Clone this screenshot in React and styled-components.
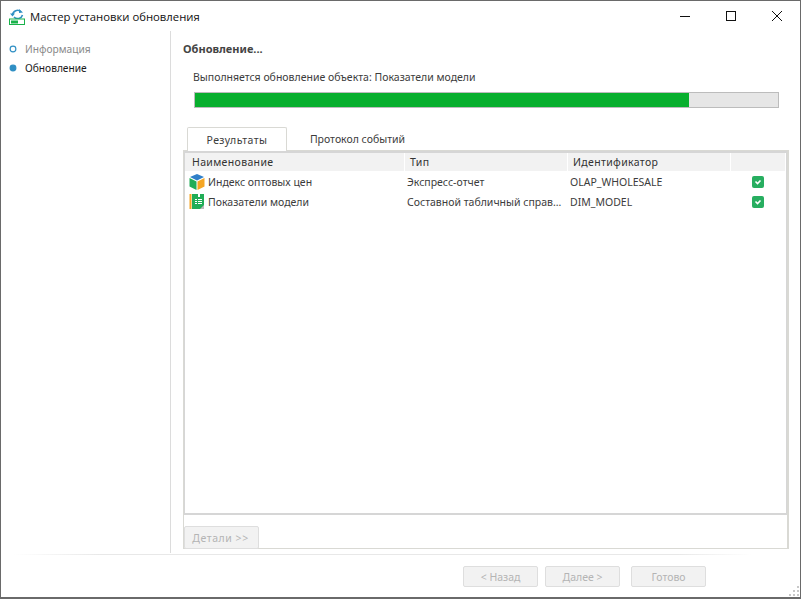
import React from "react";
import styled, { createGlobalStyle } from "styled-components";

const Global = createGlobalStyle`
  html, body { margin: 0; padding: 0; background: #fff; }
  body { font-family: "Noto Sans", "Open Sans", sans-serif; font-size: 10.5px; color: #3c3c3c; }
`;

const Win = styled.div`
  box-sizing: border-box; width: 801px; height: 599px; border: 1px solid #6a6a6a; border-bottom-width: 2px;
  display: flex; flex-direction: column; background: #fff; position: relative; overflow: hidden;
`;
const TitleBar = styled.div`height: 30px; flex: none; display: flex; align-items: center; padding-left: 8px;`;
const TitleText = styled.div`margin-left: 4px; font-family: "Open Sans", sans-serif; font-size: 11.3px; color: #111; white-space: nowrap; flex: 1;`;
const WinBtns = styled.div`display: flex; align-items: center;`;
const WinBtn = styled.div`width: 46px; height: 30px; display: flex; align-items: center; justify-content: center;`;
const Body = styled.div`display: flex; height: 522px; flex: none;`;
const Sidebar = styled.div`
  box-sizing: border-box; width: 170px; flex: none; border-right: 1px solid #dcdcdc; padding-top: 8px;
`;
const Step = styled.div`
  height: 19px; display: flex; align-items: center; padding-left: 9px; gap: 9px; font-size: 10.2px;
  color: ${p => (p.$active ? "#1a1a1a" : "#8a8a8a")};
`;
const Dot = styled.span`
  box-sizing: border-box; width: 6px; height: 6px; border-radius: 50%; flex: none;
  border: 1px solid #2f8fc4; background: ${p => (p.$active ? "#2f8fc4" : "#fff")};
  transform: scale(1.15);
`;
const Main = styled.div`flex: 1; min-width: 0; padding: 10px 12px 4px 12px; display: flex; flex-direction: column;`;
const Heading = styled.div`font-weight: 700; font-size: 11px; color: #444; height: 16px; line-height: 16px;`;
const ProgressLabel = styled.div`margin: 12px 0 0 10px; height: 16px; line-height: 16px;`;
const Track = styled.div`
  box-sizing: border-box; margin: 7px 9px 0 11px; height: 16px; border: 1px solid #bcbcbc; background: #e6e6e6; flex: none;
`;
const Fill = styled.div`height: 100%; background: #08af2e;`;
const Tabs = styled.div`display: flex; margin: 19px 0 0 4px; height: 23px; flex: none; position: relative; z-index: 1;`;
const Tab = styled.div`
  box-sizing: border-box; width: ${p => p.$w}px; height: ${p => (p.$active ? 24 : 23)}px; display: flex; align-items: center; justify-content: center;
  ${p => p.$active ? "border: 1px solid #d9d9d4; border-bottom: none; background: #fff; border-radius: 2px 2px 0 0; letter-spacing: 0.45px;" : ""}
`;
const Panel = styled.div`
  flex: 1; min-height: 0; box-sizing: border-box; border: 1px solid #d9d9d4; border-right-width: 2px;
  display: flex; flex-direction: column; width: 606px;
`;
const Table = styled.div`
  height: 364px; flex: none; box-sizing: border-box; border: 2px solid #d6d6d6; border-right-width: 1px; border-left-width: 1px;
`;
const HeadRow = styled.div`display: grid; grid-template-columns: 220px 163px 163px 1fr; height: 18px;`;
const HeadCell = styled.div`
  background: #f2f2f2; border-right: 1px solid #fff; padding-left: ${p => p.$pad || 7}px; line-height: 18px; color: #333; letter-spacing: 0.35px;
`;
const RowList = styled.div`padding-top: 1px;`;
const Row = styled.div`display: grid; grid-template-columns: 220px 163px 163px 1fr; height: 20px; align-items: center;`;
const NameCell = styled.div`display: flex; align-items: center; padding-left: 4px; gap: 3px; white-space: nowrap;`;
const Cell = styled.div`padding-left: 2px; padding-right: 2px; white-space: nowrap; overflow: hidden; text-overflow: ellipsis;`;
const CheckCell = styled.div`display: flex; justify-content: center; padding-right: 2px;`;
const PanelFooter = styled.div`flex: 1; display: flex; align-items: flex-end;`;
const DetailsBtn = styled.div`
  box-sizing: border-box; width: 75px; height: 23px; margin-bottom: -1px; border: 1px solid #dedede; border-radius: 2px; background: #f2f2f2;
  color: #b4b4b4; display: flex; align-items: center; justify-content: center; letter-spacing: 0.55px; padding-right: 2px;
`;
const FootRule = styled.div`
  height: 1px; flex: none; margin: 1px 48px 0 12px;
  background: linear-gradient(to right, #fff, #e8e8e8 12%, #e8e8e8 90%, #fff);
`;
const Footer = styled.div`flex: 1; display: flex; padding: 11px 0 0 462px; align-items: flex-start;`;
const FootBtn = styled.div`
  box-sizing: border-box; width: 75px; height: 21px; border: 1px solid #dedede; border-radius: 2px; background: #f2f2f2;
  color: #b4b4b4; display: flex; align-items: center; justify-content: center; margin-right: ${p => p.$mr}px;
`;
const Grip = styled.svg`position: absolute; right: 0; bottom: 0;`;

const AppIcon = () => (
  <svg width="17" height="17" viewBox="0 0 17 17">
    <path d="M3.500 7a5 5 0 0 1 8.500-3.200" fill="none" stroke="#2f8fc4" strokeWidth="1.600" />
    <path d="M13.500 7a5 5 0 0 1-8.500 2" fill="none" stroke="#2f8fc4" strokeWidth="1.600" />
    <path d="M10 1l4 3.500-4 .5zM1 5.500h5l-2.500 3z" fill="#2f8fc4" />
    <rect x="0.500" y="11" width="15" height="5.500" fill="#fff" stroke="#19b24b" />
    <rect x="2" y="12.500" width="7" height="3" fill="#19b24b" />
  </svg>
);
const CubeIcon = () => (
  <svg width="16" height="16" viewBox="0 0 16 16">
    <path d="M8 0l7 3-7 3.500L1 3z" fill="#2f7fc8" />
    <path d="M0.500 4l7 3.500V16l-7-3.500z" fill="#21ad57" />
    <path d="M15.500 4l-7 3.500V16l7-3.500z" fill="#f5a623" />
  </svg>
);
const GridIcon = () => (
  <svg width="16" height="16" viewBox="0 0 16 16">
    <rect x="0.500" y="0" width="2" height="15" fill="#f5a623" />
    <rect x="3" y="0" width="12" height="15" fill="#21ad57" />
    <rect x="9" y="0" width="2" height="3" fill="#fff" />
    <path d="M6 5h2v1H6zM9 5h4v1H9zM6 7h2v1H6zM9 7h4v1H9zM6 9h2v1H6zM9 9h4v1H9z" fill="#fff" />
    <path d="M11 15l4-4v4z" fill="#bbb" />
  </svg>
);
const Check = () => (
  <svg width="12" height="12" viewBox="0 0 12 12">
    <rect width="12" height="12" rx="2" fill="#27ae60" />
    <path d="M3.500 5.500L5.500 7.500L8.500 4.500" fill="none" stroke="#fff" strokeWidth="1.600" />
  </svg>
);

const rows = [
  { icon: <CubeIcon />, name: "Индекс оптовых цен", type: "Экспресс-отчет", id: "OLAP_WHOLESALE" },
  { icon: <GridIcon />, name: "Показатели модели", type: "Составной табличный справочник", id: "DIM_MODEL" },
];

export default function App() {
  return (
    <>
      <Global />
      <Win>
        <TitleBar>
          <AppIcon />
          <TitleText>Мастер установки обновления</TitleText>
          <WinBtns>
            <WinBtn>
              <svg width="10" height="10" viewBox="0 0 10 10"><path d="M0 5.500h10" stroke="#111" /></svg>
            </WinBtn>
            <WinBtn>
              <svg width="10" height="10" viewBox="0 0 10 10"><rect x=".5" y=".5" width="9" height="9" fill="none" stroke="#111" /></svg>
            </WinBtn>
            <WinBtn>
              <svg width="10" height="10" viewBox="0 0 10 10"><path d="M0 0l10 10M10 0L0 10" stroke="#111" /></svg>
            </WinBtn>
          </WinBtns>
        </TitleBar>
        <Body>
          <Sidebar>
            <Step><Dot />Информация</Step>
            <Step $active><Dot $active />Обновление</Step>
          </Sidebar>
          <Main>
            <Heading>Обновление...</Heading>
            <ProgressLabel>Выполняется обновление объекта: Показатели модели</ProgressLabel>
            <Track><Fill style={{ width: "84.8%" }} /></Track>
            <Tabs>
              <Tab $active $w={100}>Результаты</Tab>
              <Tab $w={141}>Протокол событий</Tab>
            </Tabs>
            <Panel>
              <Table>
                <HeadRow>
                  <HeadCell>Наименование</HeadCell>
                  <HeadCell $pad={5}>Тип</HeadCell>
                  <HeadCell $pad={5}>Идентификатор</HeadCell>
                  <HeadCell />
                </HeadRow>
                <RowList>
                  {rows.map(r => (
                    <Row key={r.id}>
                      <NameCell>{r.icon}{r.name}</NameCell>
                      <Cell>{r.type}</Cell>
                      <Cell>{r.id}</Cell>
                      <CheckCell><Check /></CheckCell>
                    </Row>
                  ))}
                </RowList>
              </Table>
              <PanelFooter>
                <DetailsBtn>Детали &gt;&gt;</DetailsBtn>
              </PanelFooter>
            </Panel>
          </Main>
        </Body>
        <FootRule />
        <Footer>
          <FootBtn $mr={7}>&lt; Назад</FootBtn>
          <FootBtn $mr={11}>Далее &gt;</FootBtn>
          <FootBtn $mr={0}>Готово</FootBtn>
        </Footer>
        <Grip width="12" height="12" viewBox="0 0 12 12">
          <path d="M9 1h2v2H9zM5 5h2v2H5zM9 5h2v2H9zM1 9h2v2H1zM5 9h2v2H5zM9 9h2v2H9z" fill="#c8c8c8" />
        </Grip>
      </Win>
    </>
  );
}
